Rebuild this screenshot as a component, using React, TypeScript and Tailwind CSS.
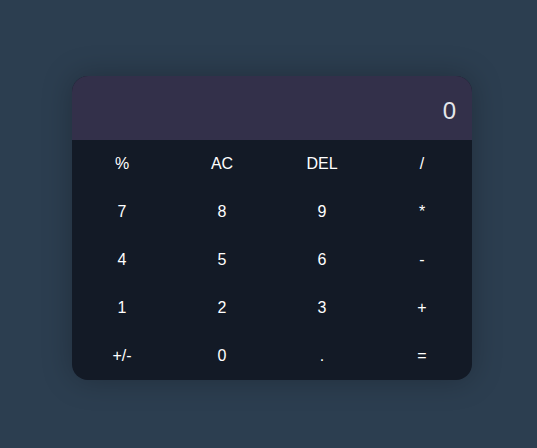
import React from "react";

const keys = ["%", "AC", "DEL", "/", "7", "8", "9", "*", "4", "5", "6", "-", "1", "2", "3", "+", "+/-", "0", ".", "="];

export default function App() {
  return (
    <div
      className="w-full h-[448px] bg-[#2c3e50] flex items-center justify-center pl-[7px] pt-[8px]"
      style={{ fontFamily: '"Liberation Sans", Arial, sans-serif' }}
    >
      <div className="w-[400px] rounded-2xl overflow-hidden bg-[#131a26] shadow-[0_0_30px_rgba(0,0,0,0.25)]">
        <div className="h-16 bg-[#33304a] flex items-center justify-end px-4 pt-[5px] text-[24px] text-gray-200">0</div>
        <div className="grid grid-cols-4">
          {keys.map((k) => (
            <div key={k} className="h-12 flex items-center justify-center text-white text-base">
              {k}
            </div>
          ))}
        </div>
      </div>
    </div>
  );
}
